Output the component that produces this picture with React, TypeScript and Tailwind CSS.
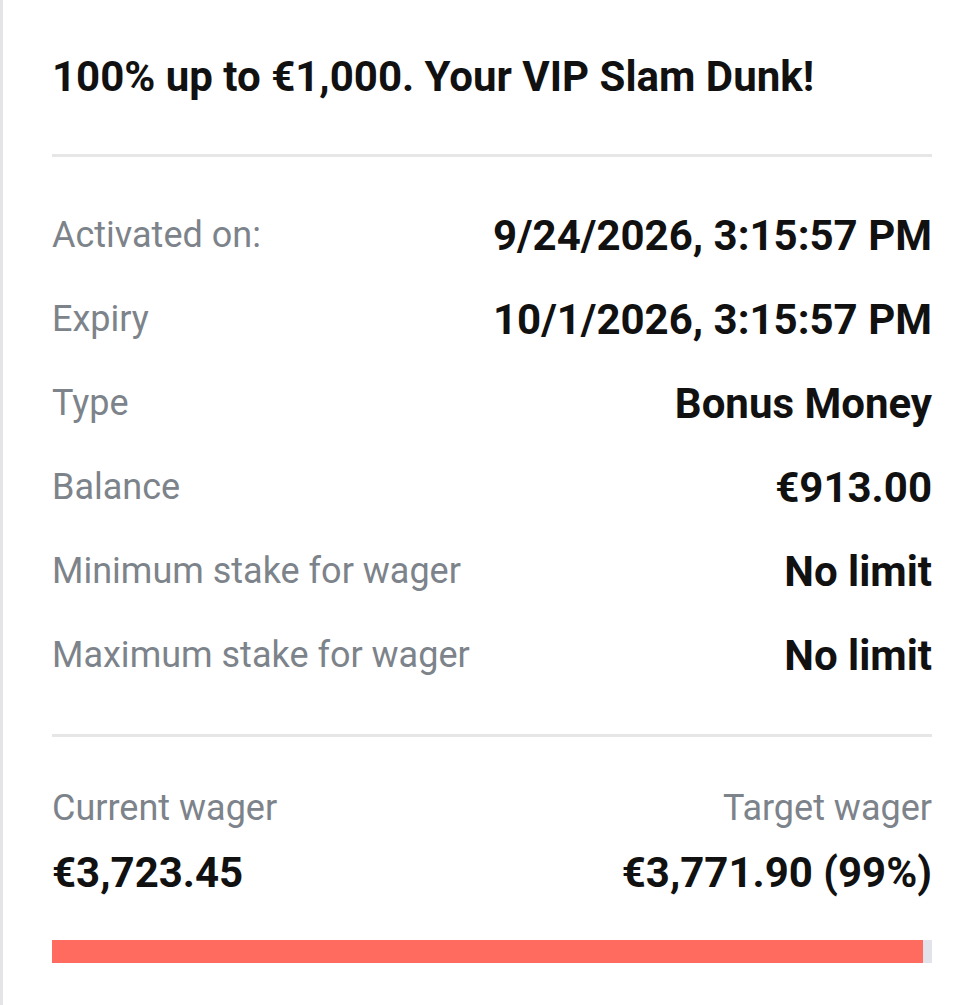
import React from "react";

const rows = [
  { label: "Activated on:", value: "9/24/2026, 3:15:57 PM" },
  { label: "Expiry", value: "10/1/2026, 3:15:57 PM" },
  { label: "Type", value: "Bonus Money" },
  { label: "Balance", value: "€913.00" },
  { label: "Minimum stake for wager", value: "No limit" },
  { label: "Maximum stake for wager", value: "No limit" },
];

export default function App() {
  const progress = 99;

  return (
    <div
      className="min-h-screen w-[978px] bg-white border-l-[3px] border-[#e4e4e6]"
      style={{ fontFamily: "Roboto, 'Liberation Sans', sans-serif" }}
    >
      <div className="pl-[49px] pr-[46px] pt-[53px]">
        {/* Title */}
        <h1 className="text-[42px] leading-[48px] font-bold text-[#111]">
          100% up to €1,000. Your VIP Slam Dunk!
        </h1>

        <div className="mt-[53px] h-[3px] bg-[#e6e6e6]" />

        {/* Details */}
        <div className="mt-[36px]">
          {rows.map((r) => (
            <div key={r.label} className="h-[84px] flex items-center justify-between">
              <span className="text-[36px] text-[#7d838a]">{r.label}</span>
              <span className="text-[42px] font-bold text-[#111]">{r.value}</span>
            </div>
          ))}
        </div>

        <div className="mt-[37px] h-[3px] bg-[#e6e6e6]" />

        {/* Wager */}
        <div className="mt-[51px] flex justify-between">
          <div>
            <div className="text-[36px] leading-[40px] text-[#7d838a]">Current wager</div>
            <div className="mt-[21px] text-[42px] leading-[48px] font-bold text-[#111]">€3,723.45</div>
          </div>
          <div className="text-right">
            <div className="text-[36px] leading-[40px] text-[#7d838a]">Target wager</div>
            <div className="mt-[21px] text-[42px] leading-[48px] font-bold text-[#111]">€3,771.90 (99%)</div>
          </div>
        </div>

        <div className="mt-[43px] h-[23px] bg-[#e2e2ea]">
          <div className="h-full bg-[#ff6b5f]" style={{ width: `${progress}%` }} />
        </div>
      </div>
    </div>
  );
}
